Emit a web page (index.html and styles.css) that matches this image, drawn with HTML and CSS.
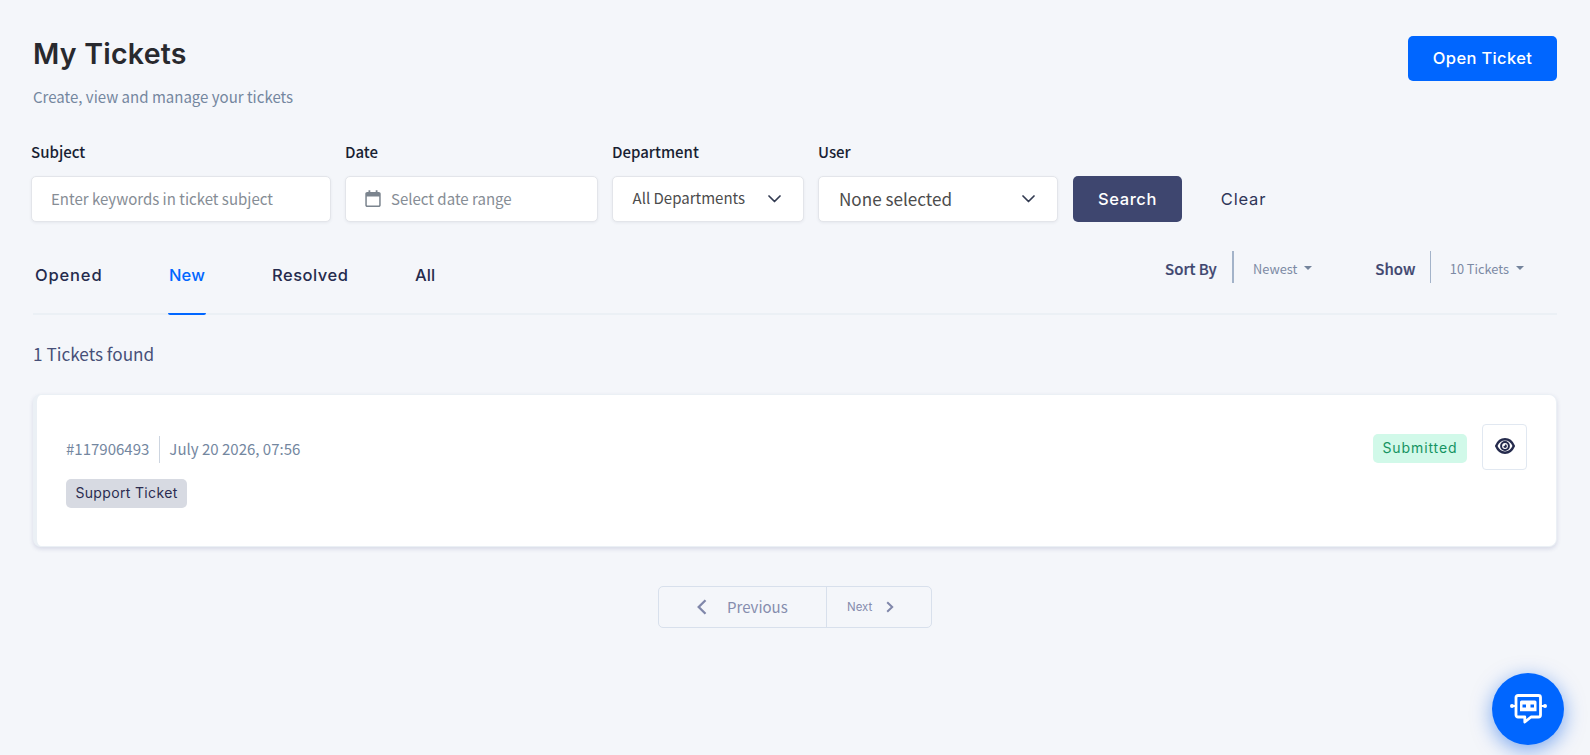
FILE: index.html
```html
<!DOCTYPE html>
<html lang="en">
<head>
<meta charset="utf-8">
<title>My Tickets</title>
<link rel="stylesheet" href="styles.css">
</head>
<body>
<main class="page">
  <header class="head">
    <div>
      <h1 class="title">My Tickets</h1>
      <p class="subtitle">Create, view and manage your tickets</p>
    </div>
    <button class="btn btn-primary">Open Ticket</button>
  </header>

  <form class="filters">
    <div class="field subject"><label>Subject</label><div class="control placeholder">Enter keywords in ticket subject</div></div>
    <div class="field date"><label>Date</label>
      <div class="control placeholder">
        <svg class="cal" width="16" height="18" viewBox="0 0 16 18"><path d="M2.200 2h11.600c1 0 1.900.8 1.900 1.800v11.400c0 1-.9 1.800-1.900 1.800H2.200c-1 0-1.900-.8-1.900-1.800V3.800c0-1 .9-1.800 1.900-1.800zM1.800 6.500v8.500c0 .3.200.5.500.5h11.400c.3 0 .5-.2.500-.5V6.500z" fill="#7b848e" fill-rule="evenodd"/><path d="M4.400.3v3M11.600.3v3" stroke="#7b848e" stroke-width="1.800"/></svg>
        <span>Select date range</span>
      </div>
    </div>
    <div class="field dept"><label>Department</label>
      <div class="control"><span class="dept-value">All Departments</span><svg width="13" height="8" viewBox="0 0 13 8"><path d="M1 1l5.500 5.500L12 1" class="chev"/></svg></div>
    </div>
    <div class="field user"><label>User</label>
      <div class="control big"><span>None selected</span><svg width="13" height="8" viewBox="0 0 13 8"><path d="M1 1l5.500 5.500L12 1" class="chev"/></svg></div>
    </div>
    <button type="button" class="btn btn-search">Search</button>
    <button type="button" class="btn btn-clear">Clear</button>
  </form>

  <div class="bar">
    <nav class="tabs">
      <a class="tab opened">Opened</a>
      <a class="tab active">New</a>
      <a class="tab resolved">Resolved</a>
      <a class="tab all">All</a>
    </nav>
    <div class="sorting">
      <b class="sort-label sort-by">Sort By</b><span class="sort-value newest">Newest<i class="caret"></i></span>
      <b class="sort-label show">Show</b><span class="sort-value count">10 Tickets<i class="caret"></i></span>
    </div>
  </div>

  <p class="found">1 Tickets found</p>

  <article class="card">
    <div>
      <div class="meta"><span class="number">#117906493</span><span class="when">July 20 2026, 07:56</span></div>
      <span class="badge badge-gray">Support Ticket</span>
    </div>
    <div class="actions">
      <span class="badge badge-green">Submitted</span>
      <button class="view"><svg width="20" height="16" viewBox="0 0 20 16" fill="none" stroke="#252b4d"><path d="M1.200 8C3 3.800 6.100 1.300 10 1.300S17 3.800 18.800 8C17 12.200 13.900 14.700 10 14.700S3 12.200 1.200 8z" stroke-width="2.400" stroke-linejoin="round"/><circle cx="10" cy="8" r="3.900" stroke-width="2"/><path d="M10.300 6.300A1.800 1.800 0 1 1 8.300 8.300C9.400 8.300 10.300 7.500 10.300 6.300z" fill="#252b4d" stroke="none"/></svg></button>
    </div>
  </article>

  <nav class="pager">
    <a class="prev"><svg width="10" height="16" viewBox="0 0 10 16"><path d="M8.500 1.200L1.700 8l6.800 6.800"/></svg><span>Previous</span></a>
    <a class="next"><span>Next</span><svg width="8" height="12" viewBox="0 0 8 12"><path d="M1.200 1.200L6.200 6l-5 4.800"/></svg></a>
  </nav>
</main>

<button class="chat">
  <svg width="37" height="30" viewBox="0 0 37 30"><path d="M8 1.500h20.500a2 2 0 0 1 2 2v17.500a2 2 0 0 1-2 2H21l-6.200 5V23H8a2 2 0 0 1-2-2V3.500a2 2 0 0 1 2-2z" fill="none" stroke="#fff" stroke-width="2.800" stroke-linejoin="round"/><path d="M2 12h4M31 12h4" stroke="#fff" stroke-width="1.800"/><circle cx="2" cy="12" r="2" fill="#fff"/><circle cx="35" cy="12" r="2" fill="#fff"/><path d="M11.500 6.500h13.500a1.500 1.500 0 0 1 1.500 1.500v9.200h-16.500V8a1.500 1.500 0 0 1 1.500-1.500zM12.500 10.500v3h3.500v-3zM20.500 10.500v3h3.500v-3z" fill="#fff" fill-rule="evenodd"/></svg>
</button>
</body>
</html>
```
FILE: styles.css
```css
* { box-sizing: border-box; }
body {
  margin: 0;
  height: 755px;
  overflow: hidden;
  background: #f4f6fa;
  font-family: "Noto Sans CJK SC", "Noto Sans", sans-serif;
  font-size: 15.02px;
  line-height: 20px;
  white-space: nowrap;
}
h1, p { margin: 0; }
button { border: 0; padding: 0; font: inherit; }
svg { display: block; flex: none; }

.page { padding: 36px 33px 0; }

.head { display: flex; justify-content: space-between; align-items: flex-start; height: 105px; }
.title {
  font: 600 28.5px/36px Inter, sans-serif;
  letter-spacing: .25px;
  color: #28292e;
}
.subtitle { margin-top: 15px; color: #74879f; }

.btn {
  display: flex;
  align-items: center;
  justify-content: center;
  height: 46px;
  border-radius: 5px;
  font-family: Inter, sans-serif;
  font-size: 16.5px;
  font-weight: 500;
}
.btn-primary { width: 149px; height: 45px; padding-bottom: 2px; background: #06f; color: #fff; letter-spacing: .35px; }

.filters { display: flex; align-items: flex-end; height: 81px; margin-left: -2px; }
.field { display: flex; flex-direction: column; gap: 14px; margin-right: 14px; }
.field label { font-weight: 500; color: #191f33; }
.control {
  display: flex;
  align-items: center;
  justify-content: space-between;
  height: 46px;
  border: 1px solid #e3e5ea;
  border-radius: 5px;
  background: #fff;
  color: #4c4c4c;
  box-shadow: 0 1px 3px rgba(40, 50, 80, .07);
}
.placeholder { justify-content: flex-start; gap: 10px; color: #868d95; }
.subject { width: 300px; }
.subject .control { padding-left: 19px; }
.date { width: 253px; }
.date .control { padding-left: 19px; }
.cal { margin-top: -1px; }
.dept { width: 192px; }
.dept .control { padding: 0 22px 0 19.5px; }
.dept-value { margin-top: -2px; }
.user { width: 240px; }
.user .control { padding: 0 22px 0 20px; font-size: 17.1px; }
.chev { fill: none; stroke: #333b52; stroke-width: 1.7; stroke-linecap: round; stroke-linejoin: round; }
.btn-search { width: 109px; margin-left: 1px; background: #3e466f; color: #fff; letter-spacing: .6px; }
.btn-clear { width: 46px; margin-left: 38.5px; background: none; color: #2f3558; font-weight: 400; letter-spacing: .8px; }

.bar {
  display: flex;
  justify-content: space-between;
  height: 78px;
  margin-top: 15px;
  border-bottom: 2px solid #ebf0f5;
}
.tabs { display: flex; font: 500 16.5px/20px Inter, sans-serif; color: #252b4d; }
.tab { height: 78px; padding-top: 28px; }
.opened { width: 135px; padding-left: 2px; letter-spacing: .85px; }
.active { width: 38px; text-align: center; color: #06f; border-bottom: 2px solid #06f; border-radius: 2px; letter-spacing: .2px; }
.resolved { margin-left: 66px; width: 143px; letter-spacing: .5px; }
.all { letter-spacing: .1px; }
.sorting { display: flex; height: 32px; margin-top: 14px; padding-right: 33px; line-height: 36px; }
.sort-label { font-weight: 500; color: #3e466f; -webkit-text-stroke: .2px #3e466f; }
.sort-by { width: 67px; }
.show { margin-left: 63px; width: 54.5px; }
.sort-value { display: flex; align-items: center; gap: 7px; font-size: 12.8px; color: #7c8aa4; padding-top: 4px; }
.newest { border-left: 2px solid #a3b3c9; padding-left: 19px; }
.count { border-left: 1px solid #a3b3c9; padding-left: 19px; }
.caret { border: 4px solid transparent; border-top-color: #74849c; border-bottom: 0; margin-top: -3px; }

.found { margin-top: 29px; font-size: 17.2px; color: #475078; }

.card {
  display: flex;
  justify-content: space-between;
  height: 153px;
  margin-top: 30px;
  padding: 28px 29px 0 29px;
  border: 1px solid #ebf0f5;
  border-left-width: 4px;
  border-radius: 8px;
  background: #fff;
  box-shadow: 0 2px 4px rgba(62, 70, 130, .16);
}
.meta { display: flex; height: 27px; margin-top: 13px; line-height: 25px; color: #74879f; }
.number { padding-right: 9.5px; border-right: 1px solid #cdd5e0; }
.when { padding-left: 9.5px; }
.badge {
  display: flex;
  align-items: center;
  justify-content: center;
  height: 29px;
  padding-bottom: 2px;
  border-radius: 5px;
  font: 400 14px/27px Inter, sans-serif;
}
.badge-gray { width: 121px; margin-top: 16px; background: #d7dae2; color: #2b2c50; letter-spacing: .35px; }
.actions { display: flex; gap: 15px; }
.badge-green { width: 94px; margin-top: 11px; background: #d1f9e9; color: #159462; letter-spacing: .9px; }
.view {
  display: flex;
  justify-content: center;
  width: 45px;
  height: 46px;
  margin-top: 1px;
  padding-top: 13px;
  border: 1px solid #e1e8f1;
  border-radius: 4px;
  background: #fff;
}

.pager {
  display: flex;
  width: 274px;
  height: 42px;
  margin: 39px auto 0;
  border: 1px solid #d8e0ec;
  border-radius: 5px;
  color: #868dae;
}
.pager svg { fill: none; stroke: #8087aa; stroke-width: 2.3; }
.prev, .next { display: flex; align-items: center; }
.prev { width: 168px; padding-left: 38px; gap: 20px; border-right: 1px solid #d8e0ec; }
.next { padding-left: 20px; gap: 14px; font-family: Inter, sans-serif; font-size: 11.5px; }
.pager .next svg { stroke-width: 2; }

.chat {
  position: fixed;
  right: 26px;
  bottom: 10px;
  display: flex;
  align-items: center;
  justify-content: center;
  width: 72px;
  height: 72px;
  border-radius: 50%;
  background: #06f;
  box-shadow: 0 5px 20px rgba(0, 90, 230, .5);
}
```
